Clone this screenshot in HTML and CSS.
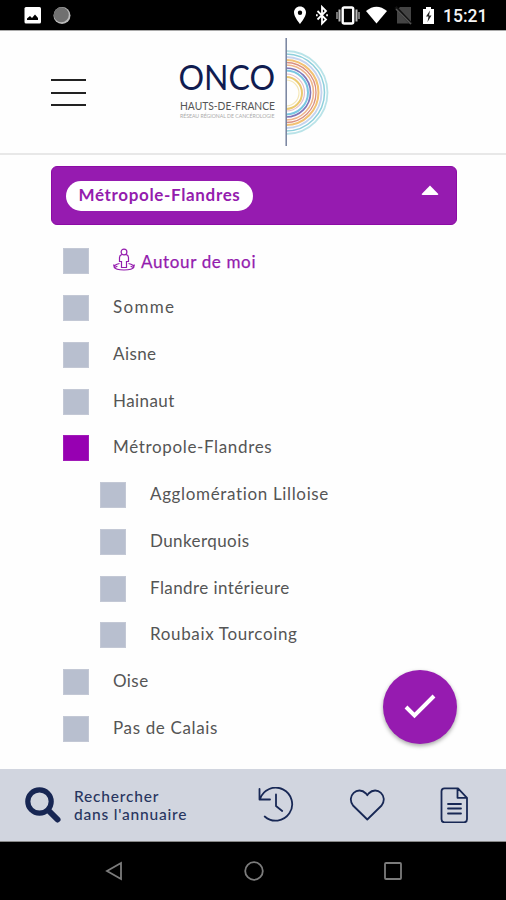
FILE: index.html
```html
<!DOCTYPE html>
<html lang="fr">
<head>
<meta charset="utf-8">
<title>ONCO Hauts-de-France</title>
<link rel="stylesheet" href="styles.css">
</head>
<body>
<div class="status">
  <svg class="status-left" width="60" height="30" viewBox="20 0 60 30">
    <rect x="24.500" y="7" width="16.500" height="16.500" rx="1.500" fill="#fff"/>
    <path d="M27 20v-1.500l3-2.500 2 2 3-3.500 3 3.500v2z" fill="#000"/>
    <circle cx="62" cy="15.500" r="8.500" fill="#bbb"/><circle cx="61.300" cy="14.700" r="7.500" fill="#707070"/>
  </svg>
  <svg class="status-right" width="148" height="30" viewBox="290 0 148 30">
    <path fill="#fff" fill-rule="evenodd" d="M300 6.500c-3.500 0-6 2.700-6 6 0 4.500 6 11.500 6 11.500s6-7 6-11.500c0-3.300-2.500-6-6-6zm0 4a2.200 2.200 0 1 1 0 4.400 2.200 2.200 0 0 1 0-4.400z"/>
    <path d="M317.500 11l8.500 8.500-4 4V7l4 4-8.500 8.500" fill="none" stroke="#fff" stroke-width="1.800"/>
    <path d="M316 15.200h1.700m8.500 0h1.700" stroke="#fff" stroke-width="2"/>
    <rect x="342.700" y="7.500" width="10.500" height="16" rx="1.500" fill="none" stroke="#fff" stroke-width="2.400"/>
    <path d="M339.500 9.500v12m17-12v12" stroke="#bbb" stroke-width="2"/><path d="M337 12v7m22-7v7" stroke="#999" stroke-width="1.500"/>
    <path d="M366 11q10.500-8.500 21 0l-10.500 12.500z" fill="#fff"/>
    <path d="M397 10l3-3h11v16.500h-14z" fill="#444"/><path d="M395.500 7l16 17" stroke="#111" stroke-width="3"/><path d="M396 9l15 15" stroke="#555" stroke-width="1.500"/>
    <path d="M423 9h3V7h5v2h3v15h-11z" fill="#fff"/><path d="M430 10.500l-4 6h2.500l-1 5.500 4-6.500H429z" fill="#222"/>
  </svg>
  <span class="clock">15:21</span>
</div>
<header class="header">
  <button class="burger" aria-label="Menu"><i></i><i></i><i></i></button>
  <svg class="logo" width="156" height="112" viewBox="176 36 156 112">
    <g class="logo-text">
      <text class="onco" x="178.500" y="90" textLength="96.500" lengthAdjust="spacingAndGlyphs">ONCO</text>
      <text class="hdf" x="180" y="109.500" textLength="95" lengthAdjust="spacingAndGlyphs">HAUTS-DE-FRANCE</text>
      <text class="sub" x="180" y="117.500" textLength="94.500" lengthAdjust="spacingAndGlyphs">RÉSEAU RÉGIONAL DE CANCÉROLOGIE</text>
    </g>
    <g fill="none">
      <path d="M286 51a41 41 0 0 1 0 83" stroke="#b9e3e8" stroke-width="1.800"/>
      <path d="M286 54a38 38 0 0 1 0 77" stroke="#8fd0dc" stroke-width="1.500"/>
      <path d="M286 57a35 35 0 0 1 0 71" stroke="#c5d3ee" stroke-width="1.800"/>
      <path d="M286 60a32 32 0 0 1 0 65" stroke="#f2c173" stroke-width="2"/>
      <path d="M286 62.500a30 30 0 0 1 0 60" stroke="#d99083" stroke-width="1.300"/>
      <path d="M286 65a27.500 27.500 0 0 1 0 55" stroke="#efb58b" stroke-width="1.600"/>
      <path d="M286 68a24.500 24.500 0 0 1 0 49" stroke="#8175b8" stroke-width="1.700"/>
      <path d="M286 70.500a22 22 0 0 1 0 44" stroke="#7ac7e2" stroke-width="2"/>
      <path d="M286 74a18.500 18.500 0 0 1 0 37" stroke="#e4bfcc" stroke-width="1.200"/>
      <path d="M286 77a16 16 0 0 1 0 32" stroke="#ebca70" stroke-width="2"/>
      <path d="M286 80a13 13 0 0 1 0 26" stroke="#f4e6b5" stroke-width="1.200"/>
      <path d="M286.200 38v108" stroke="#76829e" stroke-width="1.500"/>
    </g>
  </svg>
</header>
<main class="content">
  <div class="select"><span class="chip">Métropole-Flandres</span>
    <svg class="caret" width="18" height="11" viewBox="0 0 18 11"><path d="M9 0.500L17.300 9q.2 1-1 1H1.700q-1.200 0-1-1z" fill="#fff"/></svg>
  </div>
  <ul class="list">
    <li class="near"><i class="box"></i>
      <svg width="24" height="24" viewBox="0 0 24 24" fill="none" stroke="#941cae" stroke-width="1.200"><circle cx="11" cy="4" r="2.900"/><path d="M9 6.500q-2.500.7-2.500 3v4h2v6h5v-6h2v-4q0-2.300-2.500-3M6.500 15.500c-8 1.500-7.500 6.500 4.500 6.500s12.500-5 4.500-6.500M.6 16.500l.8 3 3-1.300M21.400 16.500l-.8 3-3-1.300"/></svg>
      <span>Autour de moi</span></li>
    <li><i class="box"></i><span class="wide">Somme</span></li>
    <li><i class="box"></i><span class="tight">Aisne</span></li>
    <li><i class="box"></i><span class="tight">Hainaut</span></li>
    <li class="checked"><i class="box"></i><span>Métropole-Flandres</span></li>
    <li class="child"><i class="box"></i><span>Agglomération Lilloise</span></li>
    <li class="child"><i class="box"></i><span class="tight">Dunkerquois</span></li>
    <li class="child"><i class="box"></i><span class="tight">Flandre intérieure</span></li>
    <li class="child"><i class="box"></i><span>Roubaix Tourcoing</span></li>
    <li><i class="box"></i><span class="tight">Oise</span></li>
    <li><i class="box"></i><span>Pas de Calais</span></li>
  </ul>
  <button class="fab" aria-label="Valider"><svg width="34" height="28" viewBox="0 0 34 28"><path d="M3 14l8.500 8.500L31 3" fill="none" stroke="#fff" stroke-width="4"/></svg></button>
</main>
<footer class="tabs">
  <a class="search">
    <svg width="37" height="37" viewBox="0 0 37 37" fill="none" stroke="#172653"><circle cx="14.500" cy="14.500" r="11.700" stroke-width="5.200"/><path d="M23.500 23.500l9 9" stroke-width="6" stroke-linecap="round"/></svg>
    <span>Rechercher<br>dans l'annuaire</span>
  </a>
  <svg class="tab" width="36" height="36" viewBox="258 787 36 36"><path d="M260 799a16.500 16.500 0 1 1 4.700 17.500M259.500 789v10.500H270M276 794.500V806l6.200 5"/></svg>
  <svg class="tab" width="36" height="36" viewBox="349 787 36 36"><path d="M367.300 819.500l-14.300-14c-7-9 4.500-20.500 13-12l1.300 1.700 1.300-1.700c8.500-8.500 20 3 13 12z"/></svg>
  <svg class="tab" width="36" height="36" viewBox="436 787 36 36"><path d="M444.500 788.300H458l9 9.500v21.500q0 3-3 3h-19.500q-3 0-3-3v-28q0-3 3-3zM457.500 788.500v9.300h9.300M448 804h13M448 808.500h13M448 813.500h13"/></svg>
</footer>
<nav class="nav">
  <svg width="22" height="22" viewBox="0 0 22 22"><path d="M18 3v16L4 11z"/></svg>
  <svg width="22" height="22" viewBox="0 0 22 22"><circle cx="11" cy="11" r="8.800"/></svg>
  <svg width="22" height="22" viewBox="0 0 22 22"><rect x="3" y="3" width="16" height="16" rx="1"/></svg>
</nav>
</body>
</html>
```
FILE: styles.css
```css
* { box-sizing: border-box; }
body { margin: 0; width: 506px; height: 900px; overflow: hidden; display: flex; flex-direction: column; background: #fefefe; font-family: Lato, "Open Sans", sans-serif; color: #555; }
svg { display: block; flex: none; }
button { border: 0; padding: 0; background: none; }
.status { height: 30px; background: #000; display: flex; align-items: center; padding: 0 20px; }
.status-right { margin-left: auto; }
.clock { width: 48px; padding-left: 5px; color: #f5f5f5; font: 500 17.500px/30px Roboto, sans-serif; padding-top: 2px; white-space: nowrap; }
.header { height: 125px; border-top: 1px solid #aaa; border-bottom: 2px solid #e8e8e8; display: flex; padding-left: 51px; }
.burger { width: 35px; display: flex; flex-direction: column; gap: 10.500px; margin-top: 48px; }
.burger i { height: 2px; background: #222; }
.logo { margin: 5px 0 0 90px; }
.onco { font: 400 34px Lato, sans-serif; fill: #101c50; }
.hdf { font: 400 11px Lato, sans-serif; fill: #555; }
.sub { font: 400 6px Lato, sans-serif; fill: #aaa; }
.content { flex: 1; position: relative; padding: 11px 49px 0 51px; }
.select { height: 59px; border-radius: 6px; background: #961bb0; border: 1px solid #8c0ba5; display: flex; justify-content: space-between; padding: 14px 17px 0 14px; }
.chip { height: 30px; width: 187px; border-radius: 15px; background: #fff; color: #941cae; font-weight: 700; font-size: 17px; line-height: 28px; text-align: center; letter-spacing: .65px; white-space: nowrap; }
.caret { margin-top: 4px; }
.list { list-style: none; margin: 13px 0 0 12px; padding: 0; }
.list li { height: 46.750px; display: flex; align-items: center; font-size: 17px; letter-spacing: .65px; white-space: nowrap; }
.box { width: 26px; height: 26px; margin-right: 24px; background: #b8bfcf; border: 1px solid #c3c8d5; flex: none; }
.list span { position: relative; top: -1.500px; }
.list .wide { letter-spacing: 1.300px; }
.list .tight { letter-spacing: .42px; }
.near { color: #941cae; }
.near svg { margin: -3px 4px 0 0; }
.list .near span { top: 0; -webkit-text-stroke: .25px #941cae; }
.checked .box { background: #9700b2; border-color: #a11bb8; }
.child { padding-left: 37px; }
.fab { position: absolute; right: 49px; top: 515px; width: 74px; height: 74px; border-radius: 50%; background: #961bb0; box-shadow: 0 2px 4px rgba(0,0,0,.35); display: flex; align-items: center; justify-content: center; }
.tabs { height: 73px; background: #d1d5df; border-bottom: 1px solid #888; display: flex; align-items: center; }
.search { display: flex; width: 258px; padding-left: 25px; gap: 12px; color: #283560; font-size: 15.500px; line-height: 18.500px; font-weight: 500; letter-spacing: .8px; white-space: nowrap; }
.tab { fill: none; stroke: #182855; stroke-width: 1.800; stroke-linejoin: round; stroke-linecap: round; }
.tab + .tab { margin-left: 55px; }
.tab + .tab + .tab { margin-left: 51px; }
.nav { height: 58px; background: #000; display: flex; align-items: center; padding-left: 103px; gap: 117.500px; }
.nav svg { fill: none; stroke: #7c7c7c; stroke-width: 1.800; }
```
